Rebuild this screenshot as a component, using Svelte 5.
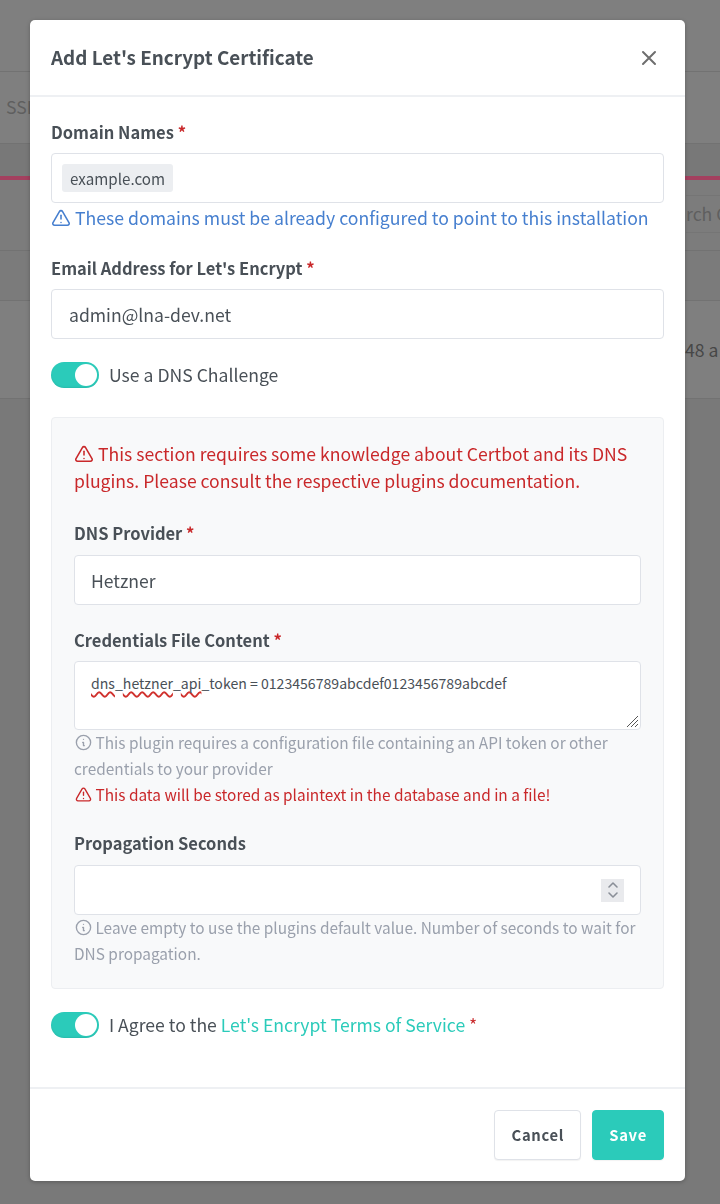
<script>
	let domain = 'example.com';
	let email = 'admin@lna-dev.net';
</script>

{#snippet warn()}
	<svg class="ico" viewBox="0 0 24 24" fill="none" stroke="currentColor" stroke-width="1.7" stroke-linecap="round" stroke-linejoin="round">
		<path d="M12 9v4" />
		<path d="M12 17h.01" />
		<path d="M5 20h14a2 2 0 0 0 1.84-2.75L13.74 4.99a2 2 0 0 0-3.5 0L3.14 17.25A2 2 0 0 0 5 20" />
	</svg>
{/snippet}

{#snippet info()}
	<svg class="ico" viewBox="0 0 24 24" fill="none" stroke="currentColor" stroke-width="1.7" stroke-linecap="round" stroke-linejoin="round">
		<circle cx="12" cy="12" r="9" />
		<path d="M12 8h.01" />
		<path d="M11 12h1v4h1" />
	</svg>
{/snippet}

<div class="page">
	<div class="page-top"></div>
	<div class="page-tabs"><span>SSL</span></div>
	<div class="page-strip"></div>
	<div class="page-accent"></div>
	<div class="page-search"><span class="search-box">rch C</span></div>
	<div class="page-head"></div>
	<div class="page-row"><span>48 a</span></div>
	<div class="page-rest"></div>
</div>

<div class="backdrop">
	<div class="modal">
		<header class="modal-head">
			<h2>Add Let's Encrypt Certificate</h2>
			<svg class="close" viewBox="0 0 16 16" fill="none" stroke="currentColor" stroke-width="2" stroke-linecap="round">
				<path d="M2 2l12 12M14 2L2 14" />
			</svg>
		</header>

		<div class="modal-body">
			<div class="label first">Domain Names <i>*</i></div>
			<div class="input tags"><span class="tag">{domain}</span></div>
			<div class="hint-blue">{@render warn()} These domains must be already configured to point to this installation</div>

			<div class="label second">Email Address for Let's Encrypt <i>*</i></div>
			<div class="input">{email}</div>

			<div class="switch-row dns">
				<span class="switch"><span class="knob"></span></span>
				<span>Use a DNS Challenge</span>
			</div>

			<section class="panel">
				<p class="danger-lg">{@render warn()} This section requires some knowledge about Certbot and its DNS plugins. Please consult the respective plugins documentation.</p>

				<div class="label provider">DNS Provider <i>*</i></div>
				<div class="input">Hetzner</div>

				<div class="label creds">Credentials File Content <i>*</i></div>
				<div class="textarea">
					<span><u>dns</u>_<u>hetzner</u>_<u>api</u>_token = 0123456789abcdef0123456789abcdef</span>
					<svg class="grip" viewBox="0 0 14 14" stroke="#555" stroke-width="1"><path d="M13 2L2 13M13 6L6 13M13 10L10 13" /></svg>
				</div>
				<div class="help after-field">{@render info()} This plugin requires a configuration file containing an API token or other credentials to your provider</div>
				<div class="help red">{@render warn()} This data will be stored as plaintext in the database and in a file!</div>

				<div class="label seconds">Propagation Seconds</div>
				<div class="input spin-wrap">
					<span class="spin">
						<svg viewBox="0 0 14 20" fill="none" stroke="#8a8f98" stroke-width="1.6" stroke-linecap="round" stroke-linejoin="round"><path d="M3 7l4-4 4 4M3 13l4 4 4-4" /></svg>
					</span>
				</div>
				<div class="help after-field">{@render info()} Leave empty to use the plugins default value. Number of seconds to wait for DNS propagation.</div>
			</section>

			<div class="switch-row agree">
				<span class="switch"><span class="knob"></span></span>
				<span>I Agree to the <span class="link">Let's Encrypt Terms of Service</span> <i>*</i></span>
			</div>
		</div>

		<footer class="modal-foot">
			<button class="btn">Cancel</button>
			<button class="btn primary">Save</button>
		</footer>
	</div>
</div>

<style>
	:global(body) {
		margin: 0;
		background: #7f7f7f;
		font-family: "Noto Sans CJK SC", "Open Sans", sans-serif;
		color: #495057;
	}

	.page {
		height: 1204px;
		overflow: hidden;
		font-size: 17.6px;
		color: #474747;
		display: flex;
		flex-direction: column;
	}

	.page-top {
		height: 71px;
		background: #7f7f7f;
		border-bottom: 1px solid #727272;
	}

	.page-tabs {
		height: 71px;
		padding-left: 6px;
		line-height: 70px;
		background: #7f7f7f;
		border-bottom: 1px solid #727272;
		color: #5f5f5f;
	}

	.page-strip {
		height: 32px;
		background: #787878;
	}

	.page-accent {
		height: 4px;
		background: #a4405f;
	}

	.page-search {
		height: 71px;
		padding: 15px 0 0 686px;
		box-sizing: border-box;
		background: #7c7c7c;
		border-bottom: 1px solid #727272;
		color: #5f5f5f;
		white-space: nowrap;
		overflow: hidden;
	}

	.search-box {
		display: block;
		width: 60px;
		height: 38px;
		line-height: 36px;
		box-sizing: border-box;
		border-top: 1px solid #757575;
		border-bottom: 1px solid #757575;
	}

	.page-head {
		height: 49px;
		background: #7b7b7b;
		border-bottom: 1px solid #727272;
	}

	.page-row {
		height: 97px;
		padding-left: 685px;
		background: #7f7f7f;
		border-bottom: 1px solid #727272;
		line-height: 98px;
		white-space: nowrap;
		overflow: hidden;
	}

	.page-rest {
		flex: 1;
		background: #797979;
	}

	.backdrop {
		position: fixed;
		inset: 0;
		padding: 20px 35px 23px 30px;
		box-sizing: border-box;
	}

	.modal {
		background: #fff;
		border-radius: 5px;
		height: 1161px;
		display: flex;
		flex-direction: column;
		box-shadow: 0 1px 4px rgba(0, 0, 0, 0.25);
	}

	.modal-head {
		height: 75px;
		padding: 0 28px 0 21px;
		display: flex;
		align-items: center;
		justify-content: space-between;
		border-bottom: 2px solid #eef0f3;
		flex: none;
	}

	h2 {
		margin: 0 0 2px;
		font-size: 18.85px;
		font-weight: 700;
		color: #495057;
	}

	.close {
		width: 16px;
		height: 16px;
		color: #6e6e6e;
	}

	.modal-body {
		flex: 1;
		padding: 0 21px;
	}

	.label {
		font-size: 16.5px;
		font-weight: 700;
		line-height: 24px;
		color: #495057;
		padding-top: 1px;
		margin-bottom: 9px;
	}

	.label i, .agree i {
		font-style: normal;
		color: #c9282a;
	}

	.first { margin-top: 22px; }
	.second { margin-top: 23px; }
	.provider { margin-top: 26px; margin-bottom: 10px; }
	.creds { margin-top: 22px; }
	.seconds { margin-top: 23px; margin-bottom: 10px; }

	.input {
		box-sizing: border-box;
		height: 50px;
		border: 1px solid #dfe2e8;
		border-radius: 4px;
		background: #fff;
		padding: 0 17px;
		display: flex;
		align-items: center;
		font-size: 17.6px;
	}

	.panel .input {
		padding-left: 16px;
	}

	.tags {
		padding-left: 10px;
	}

	.tag {
		background: #eceef1;
		border-radius: 3px;
		font-size: 15.2px;
		line-height: 28px;
		padding: 0 8px;
	}

	.ico {
		width: 22px;
		height: 22px;
		margin-left: -1px;
		margin-right: -1px;
		vertical-align: -4px;
	}

	.hint-blue {
		color: #467fcf;
		font-size: 17.66px;
		line-height: 28px;
		margin-top: 1px;
		white-space: nowrap;
	}

	.switch-row {
		display: flex;
		align-items: center;
		gap: 10px;
		font-size: 17.6px;
		line-height: 26px;
	}

	.dns { margin-top: 23px; }
	.agree { margin-top: 23px; }

	.switch {
		width: 48px;
		height: 26px;
		border-radius: 13px;
		background: #2bcbba;
		display: flex;
		align-items: center;
		justify-content: flex-end;
		padding-right: 2px;
		box-sizing: border-box;
		flex: none;
		box-shadow: inset 0 -1px 2px rgba(0, 0, 0, 0.08);
	}

	.knob {
		width: 22px;
		height: 22px;
		border-radius: 50%;
		background: #fff;
	}

	.link {
		color: #2bcbba;
	}

	.panel {
		margin-top: 29px;
		box-sizing: border-box;
		height: 572px;
		padding: 22px 22px 0;
		background: #f8f9fa;
		border: 1px solid #eceef1;
		border-radius: 4px;
	}

	.danger-lg {
		margin: 0;
		color: #c9282a;
		font-size: 17.6px;
		line-height: 27px;
	}

	.textarea {
		position: relative;
		box-sizing: border-box;
		height: 69px;
		border: 1px solid #dfe2e8;
		border-radius: 4px;
		background: #fff;
		padding: 9px 16px;
		font-size: 14.1px;
		line-height: 24px;
		color: #495057;
	}

	.textarea u {
		text-decoration: underline wavy #d0312d 1.5px;
		text-decoration-skip-ink: none;
		text-underline-offset: 2px;
	}

	.grip {
		position: absolute;
		right: 1px;
		bottom: 1px;
		width: 14px;
		height: 14px;
	}

	.help {
		font-size: 15.4px;
		line-height: 26px;
		color: #9aa0ac;
	}

	.help.after-field {
		margin-top: -1px;
	}

	.help.red {
		color: #c9282a;
	}

	.help .ico {
		width: 19px;
		height: 19px;
		margin-left: 0;
		vertical-align: -3px;
	}

	.panel .spin-wrap {
		justify-content: flex-end;
		padding-right: 16px;
	}

	.spin {
		width: 23px;
		height: 23px;
		background: #e9eaed;
		display: flex;
		align-items: center;
		justify-content: center;
	}

	.spin svg {
		width: 14px;
		height: 20px;
	}

	.modal-foot {
		flex: none;
		height: 94px;
		box-sizing: border-box;
		border-top: 2px solid #eef0f3;
		padding: 21px 21px 0;
		display: flex;
		justify-content: flex-end;
		gap: 11px;
	}

	.btn {
		height: 50px;
		box-sizing: border-box;
		border: 1px solid #dfe2e8;
		border-radius: 4px;
		background: #fff;
		color: #495057;
		font: 700 14.8px "Noto Sans CJK SC", "Open Sans", sans-serif;
		letter-spacing: 0.7px;
		padding: 0 16px 2px;
		box-shadow: 0 1px 1px rgba(0, 0, 0, 0.05);
	}

	.btn.primary {
		background: #2bcbba;
		border-color: #2bcbba;
		color: #fff;
	}
</style>
